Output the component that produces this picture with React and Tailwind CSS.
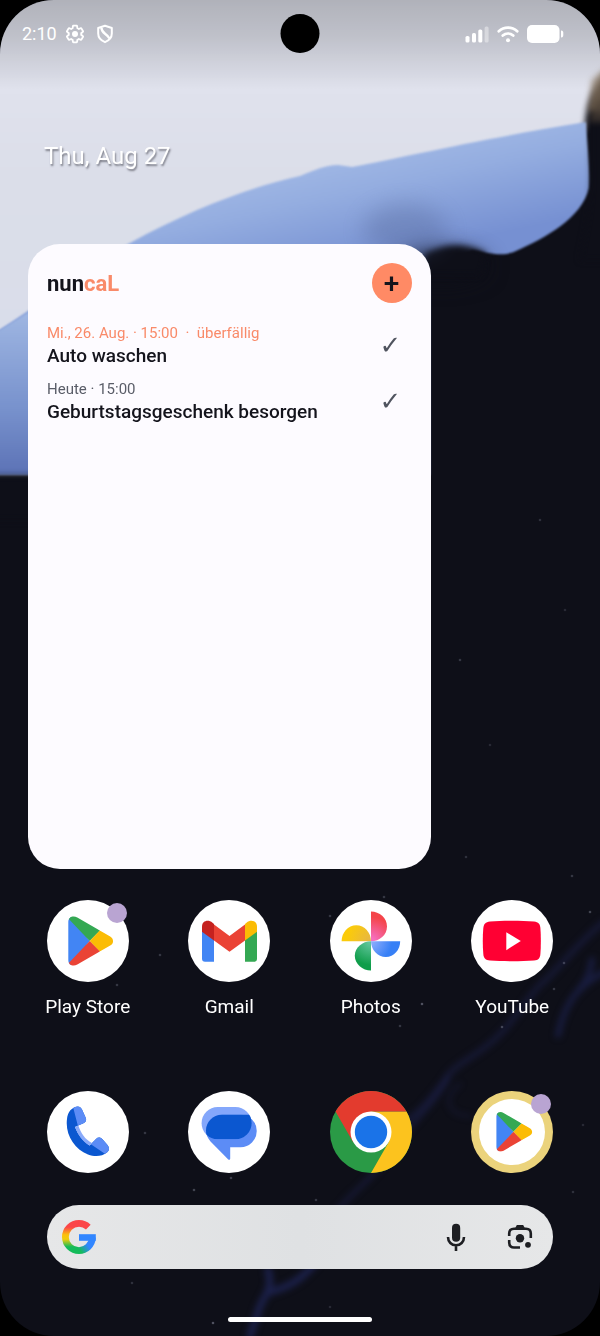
import React, { useId } from "react";

const TASKS = [
  { id: 1, meta: "Mi., 26. Aug. · 15:00  ·  überfällig", title: "Auto waschen", overdue: true },
  { id: 2, meta: "Heute · 15:00", title: "Geburtstagsgeschenk besorgen", overdue: false },
];

const STARS = [
  [117, 985, 0.3], [160, 955, 0.3], [422, 1004, 0.5], [502, 1027, 0.4], [590, 912, 0.4],
  [572, 876, 0.3], [466, 857, 0.25], [145, 1133, 0.3], [231, 1178, 0.35], [213, 1323, 0.5],
  [132, 1283, 0.25], [330, 1307, 0.2], [316, 1200, 0.3], [564, 963, 0.35], [554, 989, 0.3],
  [400, 1026, 0.3], [583, 1125, 0.2], [573, 1192, 0.25], [460, 660, 0.3], [540, 520, 0.25],
  [565, 610, 0.2], [490, 745, 0.2], [384, 897, 0.3], [330, 916, 0.3], [194, 1190, 0.4],
];

function Wallpaper() {
  return (
    <svg viewBox="0 0 600 1336" preserveAspectRatio="xMidYMin slice" className="absolute inset-0 h-full w-full" aria-hidden="true">
      <defs>
        <linearGradient id="wp-sky" x1="0" y1="0" x2="0" y2="1">
          <stop offset="0" stopColor="#dcdee8" />
          <stop offset="0.2" stopColor="#e0e2ed" />
          <stop offset="0.4" stopColor="#dbdee9" />
          <stop offset="1" stopColor="#d8ddeb" />
        </linearGradient>
        <linearGradient id="wp-blue" x1="300" y1="130" x2="330" y2="270" gradientUnits="userSpaceOnUse">
          <stop offset="0" stopColor="#abc1e9" />
          <stop offset="0.5" stopColor="#94ade0" />
          <stop offset="1" stopColor="#7690d2" />
        </linearGradient>
        <linearGradient id="wp-left" x1="0" y1="300" x2="0" y2="480" gradientUnits="userSpaceOnUse">
          <stop offset="0" stopColor="#a4bbe5" />
          <stop offset="0.6" stopColor="#7892cd" />
          <stop offset="1" stopColor="#5a70b4" />
        </linearGradient>
        <linearGradient id="wp-scrim" x1="0" y1="0" x2="0" y2="1">
          <stop offset="0" stopColor="#000" stopOpacity="0.2" />
          <stop offset="0.4" stopColor="#000" stopOpacity="0.14" />
          <stop offset="1" stopColor="#000" stopOpacity="0" />
        </linearGradient>
        <filter id="wp-b1" x="-20%" y="-20%" width="140%" height="140%" colorInterpolationFilters="sRGB"><feGaussianBlur stdDeviation="1" /></filter>
        <filter id="wp-b3" x="-100%" y="-100%" width="300%" height="300%" colorInterpolationFilters="sRGB"><feGaussianBlur stdDeviation="3" /></filter>
        <filter id="wp-b12" x="-100%" y="-200%" width="300%" height="500%" colorInterpolationFilters="sRGB"><feGaussianBlur stdDeviation="11" /></filter>
      </defs>
      <rect width="600" height="1336" fill="#0e0f18" />
      <path d="M-10 -10H612V68C600 80 587 92 585 128L560 160L400 200V300L200 474H-10Z" fill="url(#wp-sky)" filter="url(#wp-b3)" />
      <path d="M-10 336C40 306 80 270 130 243C190 210 250 187 300 176C315 170 325 165 338 165L352 167C400 158 480 139 586 122C588 150 590 170 589 188C582 218 545 238 516 251C500 258 488 252 472 250L430 270V475H-10Z" fill="url(#wp-blue)" filter="url(#wp-b1)" />
      <path d="M-10 336L40 305V474H-10Z" fill="url(#wp-left)" filter="url(#wp-b1)" />
      <path d="M-20 476H60V520H-20Z" fill="#0e0f18" filter="url(#wp-b3)" />
      <ellipse cx="442" cy="266" rx="44" ry="15" fill="#0e0f18" filter="url(#wp-b12)" />
      <path d="M425 254C445 244 462 242 486 253L480 275H425Z" fill="#0e0f18" filter="url(#wp-b3)" />
      <ellipse cx="405" cy="230" rx="42" ry="26" fill="#4b5c8a" opacity="0.3" filter="url(#wp-b12)" />
      <path d="M591 116L612 106V260H580C587 225 593 200 591 160Z" fill="#0e0f18" filter="url(#wp-b3)" />
      <path d="M592 80L608 66V112H588Z" fill="#8d7960" opacity="0.7" filter="url(#wp-b3)" />
      <path d="M596 102L608 96V122H588Z" fill="#4a3f35" opacity="0.7" filter="url(#wp-b3)" />
      <g fill="none" stroke="#1d2250" strokeLinecap="round" filter="url(#wp-b3)">
        <path d="M604 922C580 940 560 968 540 985C525 1000 515 1020 500 1034C480 1056 455 1062 445 1080C430 1100 420 1112 404 1122" strokeWidth="6" opacity="0.5" />
        <path d="M604 972C580 985 565 1000 558 1035M592 960C590 975 586 982 580 988" strokeWidth="6" opacity="0.7" />
        <path d="M448 1078C432 1108 405 1128 385 1160C365 1190 330 1200 310 1262" strokeWidth="5" opacity="0.5" />
        <path d="M268 1270C274 1292 262 1296 258 1312L250 1336M270 1292C285 1288 300 1282 316 1262" strokeWidth="7" opacity="0.9" />
        <path d="M460 1084C440 1100 450 1116 470 1116" strokeWidth="3" opacity="0.4" />
      </g>
      {STARS.map(([x, y, o]) => (
        <circle key={`${x}-${y}`} cx={x} cy={y} r="1.3" fill="#8f93a5" opacity={o} />
      ))}
      <rect width="600" height="90" fill="url(#wp-scrim)" />
    </svg>
  );
}

function PlayMark() {
  const id = useId();
  return (
    <g clipPath={`url(#${id})`}>
      <clipPath id={id}>
        <path d="M21.3 22C21.3 17 26 15 30.3 17.4L63.2 36.6C67 39 67 43.5 63.2 45.6L30.3 64.6C26 67 21.3 65 21.3 60Z" />
      </clipPath>
      <path d="M15 5V77L42.7 41Z" fill="#4285f4" />
      <path d="M21.3 10V18.5L42.7 41L53 30.5L30 8Z" fill="#34a853" />
      <path d="M42.7 41L53 30.2L75 41L53 51.8Z" fill="#fbbc04" />
      <path d="M21.3 72V63.5L42.7 41L53 51.5L30 76Z" fill="#ea4335" />
    </g>
  );
}

function Disc({ fill = "#fff", children }) {
  return (
    <svg viewBox="0 0 82 82" className="size-[82px]" aria-hidden="true">
      <circle cx="41" cy="41" r="41" fill={fill} />
      {children}
    </svg>
  );
}

const PlayStoreIcon = () => <Disc><PlayMark /></Disc>;

const GmailIcon = () => (
  <Disc>
    <path d="M14 31H26V61.7H17Q14 61.7 14 58.7Z" fill="#4285f4" />
    <path d="M57 31H69V58.7Q69 61.7 66 61.7H57Z" fill="#34a853" />
    <path d="M26 24.5L41.5 36L57 24.5V40.5L41.5 51.7L26 40.5Z" fill="#ea4335" />
    <path d="M14 26.5C14 21 20 18.9 24.5 22.7L26 24V40.5L14 31.8Z" fill="#c5221f" />
    <path d="M69 26.5C69 21 63 18.9 58.5 22.7L57 24V40.5L69 31.8Z" fill="#fbbc04" />
  </Disc>
);

const PhotosIcon = () => (
  <Disc>
    <defs>
      <radialGradient id="ph-r" cx="41" cy="41" r="30" gradientUnits="userSpaceOnUse"><stop offset="0.1" stopColor="#f56fc0" /><stop offset="0.8" stopColor="#f4444a" /></radialGradient>
      <radialGradient id="ph-y" cx="41" cy="41" r="30" gradientUnits="userSpaceOnUse"><stop offset="0" stopColor="#e5b548" /><stop offset="0.8" stopColor="#fbcb0a" /></radialGradient>
      <radialGradient id="ph-b" cx="41" cy="41" r="30" gradientUnits="userSpaceOnUse"><stop offset="0.1" stopColor="#86a9fb" /><stop offset="0.7" stopColor="#3780f6" /></radialGradient>
      <radialGradient id="ph-g" cx="41" cy="41" r="30" gradientUnits="userSpaceOnUse"><stop offset="0.1" stopColor="#5fc59a" /><stop offset="0.8" stopColor="#0f9d4a" /></radialGradient>
    </defs>
    <path d="M41 11.5C49.5 11.5 57 18 57 26.5S49.5 41.3 41 41.3Z" fill="url(#ph-r)" />
    <path d="M11.6 41.3C11.6 32.5 18 25.2 26.3 25.2S41 32.5 41 41.3Z" fill="url(#ph-y)" />
    <path d="M41 41.3H70.2C70.2 49.8 64 57 55.8 57S41 49.8 41 41.3Z" fill="url(#ph-b)" />
    <path d="M41 41.3V70.6C32.5 70.6 24.8 64 24.8 55.8S32.5 41.3 41 41.3Z" fill="url(#ph-g)" />
  </Disc>
);

const YouTubeIcon = () => (
  <Disc>
    <path d="M19 21.4C32 20.5 50 20.5 63 21.4C67.500 21.800 69 24 69.400 28C70 36 70 46 69.400 54C69 58 67.500 60.200 63 60.600C50 61.500 32 61.500 19 60.600C14.500 60.200 12.700 58 12.300 54C11.600 46 11.600 36 12.300 28C12.700 24 14.500 21.800 19 21.400Z" fill="#ff0033" />
    <path d="M35.3 32.2L49.8 41L35.3 50.2Z" fill="#fff" />
  </Disc>
);

const PhoneIcon = () => (
  <Disc>
    <clipPath id="tel">
      <path d="M27.500 16.300C31 14.600 33.500 15.500 35 18.500L38.600 26.500C39.700 29.500 39 31 36.500 32.200L28 36C31 43.500 36 50 42.500 54.500L49 48C51 46 53.500 46.200 55.500 48.200L60.500 54C62.700 57 62.500 59.500 60 61.500C55 65.500 48 66 41 63.500C27 58 18 43 20 28C20.700 22 23 18.500 27.500 16.300Z" />
    </clipPath>
    <g clipPath="url(#tel)">
      <rect width="82" height="82" fill="#0b57d0" />
      <path d="M25.500 14L30.800 34.500L44 30V10ZM43.500 53L59 63.500L66 56L52 42Z" fill="#5c8cf6" />
    </g>
    <path d="M28 36L31.300 34.500C34 42 38 48.500 45 52L42.500 54.500C35 50 30.500 43 28 36Z" fill="#8aaafa" />
  </Disc>
);

const MessagesIcon = () => (
  <Disc>
    <clipPath id="msg"><rect x="13.600" y="16" width="50" height="32.300" rx="16.150" /></clipPath>
    <rect x="13.600" y="16" width="50" height="32.300" rx="16.150" fill="#84a7fb" />
    <path d="M34 23.700H52.500A16.200 16.200 0 0 1 52.500 56.200H42.200V67.500C42.200 69 41 69.200 40 68.200L22.500 50.500C19.500 47 18 43.500 18 39.500C18 31 25 23.700 34 23.700Z" fill="#5c8cf6" />
    <path d="M34 23.700H70V48.300H20.500C18.800 45.500 18 42.500 18 39.500C18 31 25 23.700 34 23.700Z" fill="#0b57d0" clipPath="url(#msg)" />
  </Disc>
);

const ChromeIcon = () => (
  <Disc fill="#2a9a46">
    <path d="M41 82A41 41 0 0 0 76.500 20.500H41L58.700 51.200Z" fill="#fcc31e" />
    <path d="M5.500 20.500A41 41 0 0 1 76.500 20.500H41L23.200 51.200Z" fill="#e33b2e" />
    <circle cx="41" cy="41" r="20.500" fill="#fff" />
    <circle cx="41" cy="41" r="16.200" fill="#1a73e8" />
  </Disc>
);

const PlaySuggestedIcon = () => (
  <Disc fill="#ebd37c">
    <circle cx="41" cy="41" r="33" fill="#fff" />
    <g transform="translate(8.300 8) scale(0.800)"><PlayMark /></g>
  </Disc>
);

const APPS = [
  { name: "Play Store", Icon: PlayStoreIcon, badge: true },
  { name: "Gmail", Icon: GmailIcon },
  { name: "Photos", Icon: PhotosIcon },
  { name: "YouTube", Icon: YouTubeIcon },
];

const DOCK = [
  { name: "Phone", Icon: PhoneIcon },
  { name: "Messages", Icon: MessagesIcon },
  { name: "Chrome", Icon: ChromeIcon },
  { name: "Google Play", Icon: PlaySuggestedIcon, badge: true },
];

function AppButton({ app, labelled }) {
  const { name, Icon, badge } = app;
  return (
    <button type="button" aria-label={name} className="flex flex-col items-center">
      <span className="relative">
        <Icon />
        {badge && <span className="absolute top-[3px] right-[2px] size-5 rounded-full bg-[#b9a4d2]" />}
      </span>
      {labelled && <span className="mt-3 text-[19px] leading-[26px] text-white">{name}</span>}
    </button>
  );
}

function StatusBar() {
  return (
    <header className="relative flex h-[67px] items-center justify-between pr-9 pl-[22px] text-white">
      <div className="flex items-center gap-2">
        <span className="text-lg leading-6">2:10</span>
        <svg viewBox="0 0 24 24" className="size-5" fill="none" stroke="currentColor" strokeWidth="2.200">
          <path d="M19.430 12.980c.04-.32.07-.64.07-.98 0-.34-.03-.66-.07-.98l2.110-1.650c.19-.15.24-.42.12-.64l-2-3.460a.5.5 0 0 0-.61-.22l-2.490 1c-.52-.4-1.080-.73-1.690-.98l-.38-2.650A.488.488 0 0 0 14 2h-4c-.25 0-.46.18-.49.42l-.38 2.650c-.61.25-1.170.59-1.690.98l-2.490-1a.566.566 0 0 0-.18-.03c-.17 0-.34.09-.43.25l-2 3.460c-.13.22-.07.49.12.64l2.110 1.650c-.04.32-.07.65-.07.98 0 .33.03.66.07.98l-2.110 1.650c-.19.15-.24.42-.12.64l2 3.460a.5.5 0 0 0 .61.22l2.490-1c.52.4 1.080.73 1.690.98l.38 2.650c.03.24.24.42.49.42h4c.25 0 .46-.18.49-.42l.38-2.650c.61-.25 1.170-.59 1.690-.98l2.490 1c.06.02.12.03.18.03.17 0 .34-.09.43-.25l2-3.460c.12-.22.07-.49-.12-.64l-2.110-1.650z" />
          <circle cx="12" cy="12" r="3.600" fill="currentColor" stroke="none" />
        </svg>
        <svg viewBox="0 0 20 20" className="ml-0.5 size-5" fill="none" stroke="currentColor" strokeWidth="2" strokeLinejoin="round">
          <path d="M10 1.800L16.800 4V9.500C16.800 13.500 14 16.500 10 18.200C6 16.500 3.200 13.500 3.200 9.500V4Z" />
          <path d="M6.500 4C6.500 9.500 11.500 9 14.500 14.500" strokeWidth="2.400" />
        </svg>
      </div>
      <span className="absolute top-3.5 left-1/2 size-[39px] -translate-x-1/2 rounded-full bg-black" />
      <div className="flex items-center gap-2">
        <svg viewBox="0 0 24 18" className="h-[18px] w-6" fill="currentColor">
          <rect x="0.500" y="11" width="4" height="6.500" rx="1.600" />
          <rect x="7" y="8" width="4" height="9.500" rx="1.600" />
          <rect x="13.300" y="4.500" width="4" height="13" rx="1.600" />
          <rect x="19.600" y="1.500" width="4" height="16" rx="1.600" opacity="0.400" />
        </svg>
        <svg viewBox="0 0 22 18" className="h-[18px] w-[22px]" fill="none" stroke="currentColor" strokeWidth="2.800" strokeLinecap="round">
          <path d="M1.800 6.200C7 1.400 15 1.400 20.200 6.200M5.800 10.500C8.800 7.900 13.200 7.900 16.200 10.500" />
          <circle cx="11" cy="15.200" r="2" fill="currentColor" stroke="none" />
        </svg>
        <svg viewBox="0 0 37 18" className="h-[18px] w-[37px]" fill="currentColor">
          <rect width="32.500" height="18" rx="5" />
          <path d="M34 5.500C36.300 5.500 36.300 7 36.300 9S36.300 12.500 34 12.500Z" />
        </svg>
      </div>
    </header>
  );
}

function TaskWidget() {
  return (
    <section className="col-span-3 mx-[11px] flex flex-col rounded-[32px] bg-[#fdfbff] px-[19px] pt-[19px]">
      <div className="flex items-center justify-between">
        <h1 className="pt-0.5 text-[22px] leading-7 font-bold text-[#14141c]">
          nun<span className="text-[#f98a69]">caL</span>
        </h1>
        <button type="button" aria-label="Neue Aufgabe" className="flex size-10 items-center justify-center rounded-full bg-[#ff8a65] pt-0.5 text-[28px] leading-8 font-medium text-[#14141c]">
          +
        </button>
      </div>
      <ul className="mt-[19px] flex flex-col gap-2.5">
        {TASKS.map((t) => (
          <li key={t.id} className="flex items-center justify-between">
            <div>
              <p className={`text-[15px] leading-[22px] whitespace-pre ${t.overdue ? "text-[#f98a69]" : "text-[#5a5d68]"}`}>{t.meta}</p>
              <p className="text-[19px] leading-6 font-medium text-[#14141c]">{t.title}</p>
            </div>
            <button type="button" aria-label={`${t.title} erledigt`} className="w-[42px] text-center font-['DejaVu_Sans',sans-serif] text-[26px] leading-8 text-[#50545f]">
              ✓
            </button>
          </li>
        ))}
      </ul>
    </section>
  );
}

function SearchBar() {
  return (
    <form role="search" onSubmit={(e) => e.preventDefault()} className="mx-[30px] mt-8 flex h-16 items-center rounded-full bg-linear-to-r from-[#e6e7e8] via-[#dfe1e3] to-[#e6e7e8] pr-[19px] pl-[15px]">
      <svg viewBox="0 0 34 34" className="size-[34px] shrink-0" fill="none" strokeWidth="6.800" aria-hidden="true">
        <defs>
          <linearGradient id="g-left" x1="0" y1="3" x2="0" y2="31" gradientUnits="userSpaceOnUse">
            <stop offset="0.150" stopColor="#fb4548" />
            <stop offset="0.420" stopColor="#fcc00d" />
            <stop offset="0.580" stopColor="#f0cc0c" />
            <stop offset="0.850" stopColor="#14bb5a" />
          </linearGradient>
          <linearGradient id="g-right" x1="15" y1="31" x2="30" y2="20" gradientUnits="userSpaceOnUse">
            <stop offset="0.150" stopColor="#14bb5a" />
            <stop offset="0.650" stopColor="#3186ff" />
          </linearGradient>
        </defs>
        <path d="M17 3.400A13.600 13.600 0 0 0 17 30.600" stroke="url(#g-left)" />
        <path d="M16.900 3.400A13.600 13.600 0 0 1 26.300 7.100" stroke="#fb4548" />
        <path d="M16.900 30.600A13.600 13.600 0 0 0 30.400 17.500" stroke="url(#g-right)" />
        <path d="M17 14.200H33.800V20.800H17Z" fill="#3186ff" />
      </svg>
      <input type="search" aria-label="Search" className="min-w-0 flex-1 bg-transparent px-3 text-lg outline-none" />
      <button type="button" aria-label="Voice search" className="flex w-7 justify-center">
        <svg viewBox="0 0 20 28" className="h-7 w-5" fill="none" stroke="#1d1e22" strokeWidth="2.600">
          <rect x="6" y="0.800" width="8.200" height="18" rx="4.100" fill="#1d1e22" stroke="none" />
          <path d="M2 14C2 19 5.500 22.200 10 22.200S18 19 18 14M10 22V28" />
        </svg>
      </button>
      <button type="button" aria-label="Google Lens" className="ml-9 flex w-7 justify-center">
        <svg viewBox="0 0 26 26" className="size-[26px]" fill="none" stroke="#1d1e22" strokeWidth="2.600">
          <path d="M2.200 12V9.500Q2.200 4.800 7 4.800H19Q23.800 4.800 23.800 9.500V14M2.200 16V18.500Q2.200 23.500 7 23.500H13" />
          <path d="M8 4.500L9.800 1H16.200L18 4.500Z" fill="#1d1e22" stroke="none" />
          <circle cx="13" cy="14.200" r="4.200" fill="#1d1e22" stroke="none" />
          <circle cx="21" cy="20.800" r="2.900" fill="#1d1e22" stroke="none" />
        </svg>
      </button>
    </form>
  );
}

export default function App() {
  return (
    <div className="min-h-screen bg-black font-[Roboto,sans-serif]">
      <div className="relative isolate flex min-h-screen flex-col overflow-hidden rounded-[54px]">
        <div className="absolute inset-0 -z-10">
          <Wallpaper />
        </div>
        <StatusBar />
        <p className="mt-[73px] px-11 text-2xl leading-8 text-white [text-shadow:1px_2px_2px_rgba(60,60,70,0.6)]">Thu, Aug 27</p>
        <main className="mt-[72px] flex flex-1 flex-col px-[17px]">
          <div className="grid flex-1 grid-cols-4">
            <TaskWidget />
          </div>
          <nav aria-label="Apps" className="mt-[31px] grid grid-cols-4">
            {APPS.map((app) => <AppButton key={app.name} app={app} labelled />)}
          </nav>
          <nav aria-label="Dock" className="mt-[71px] grid grid-cols-4">
            {DOCK.map((app) => <AppButton key={app.name} app={app} />)}
          </nav>
          <SearchBar />
        </main>
        <div className="mx-auto mt-12 mb-3.5 h-[5px] w-36 rounded-full bg-white" />
      </div>
    </div>
  );
}
